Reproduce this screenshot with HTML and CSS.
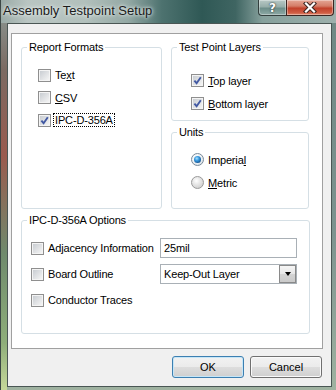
FILE: index.html
```html
<!DOCTYPE html>
<html lang="en">
<head>
    <meta charset="UTF-8">
    <meta name="viewport" content="width=device-width, initial-scale=1.0">
    <title>Assembly Testpoint Setup</title>
    <link rel="stylesheet" href="styles.css">
</head>
<body>
    <div class="window">
        <div class="titlebar">
            <span class="title">Assembly Testpoint Setup</span>
            <div class="caption-buttons">
                <span class="cap-btn help">?</span>
                <span class="cap-btn close">
                    <svg width="14" height="11" viewBox="0 0 14 11">
                        <path d="M3 1.5 L11 9.5 M11 1.5 L3 9.5" stroke="#3a2420" stroke-width="4.2" stroke-linecap="square"/>
                        <path d="M3 1.5 L11 9.5 M11 1.5 L3 9.5" stroke="#fff" stroke-width="2.2" stroke-linecap="square"/>
                    </svg>
                </span>
            </div>
        </div>

        <div class="client">
            <div class="panel">
                <div class="top-row">
                    <fieldset class="group formats">
                        <legend>Report Formats</legend>
                        <label class="check"><span class="box"></span><span>Te<u>x</u>t</span></label>
                        <label class="check"><span class="box"></span><span><u>C</u>SV</span></label>
                        <label class="check"><span class="box checked"><svg width="9" height="9" viewBox="0 0 9 9"><path d="M1.4 4.6 L3.6 7.2 L7.8 1.2" fill="none" stroke="#4259a3" stroke-width="1.9"/></svg></span><span class="focus">IPC-D-356A</span></label>
                    </fieldset>

                    <div class="right-col">
                        <fieldset class="group layers">
                            <legend>Test Point Layers</legend>
                            <label class="check"><span class="box checked"><svg width="9" height="9" viewBox="0 0 9 9"><path d="M1.4 4.6 L3.6 7.2 L7.8 1.2" fill="none" stroke="#4259a3" stroke-width="1.9"/></svg></span><span><u>T</u>op layer</span></label>
                            <label class="check"><span class="box checked"><svg width="9" height="9" viewBox="0 0 9 9"><path d="M1.4 4.6 L3.6 7.2 L7.8 1.2" fill="none" stroke="#4259a3" stroke-width="1.9"/></svg></span><span><u>B</u>ottom layer</span></label>
                        </fieldset>
                        <fieldset class="group units">
                            <legend>Units</legend>
                            <label class="check"><span class="radio on"><span class="dot"></span></span><span>Imperia<u>l</u></span></label>
                            <label class="check"><span class="radio"></span><span><u>M</u>etric</span></label>
                        </fieldset>
                    </div>
                </div>

                <fieldset class="group options">
                    <legend>IPC-D-356A Options</legend>
                    <div class="option-grid">
                        <label class="check"><span class="box"></span><span>Adjacency Information</span></label>
                        <div class="field">25mil</div>
                        <label class="check"><span class="box"></span><span>Board Outline</span></label>
                        <div class="field combo">
                            <span>Keep-Out Layer</span>
                            <span class="drop"><span class="arrow"></span></span>
                        </div>
                        <label class="check"><span class="box"></span><span>Conductor Traces</span></label>
                    </div>
                </fieldset>
            </div>

            <div class="buttons">
                <button class="btn default">OK</button>
                <button class="btn">Cancel</button>
            </div>
        </div>
    </div>
</body>
</html>
```

FILE: styles.css
```css
body {
    margin: 0;
    font-family: "Liberation Sans", Arial, sans-serif;
    font-size: 11px;
    letter-spacing: -0.15px;
    color: #000;
}
* {
    box-sizing: border-box;
}
.window {
    width: 336px;
    height: 390px;
    display: flex;
    flex-direction: column;
    border-left: 1px solid #3c4745;
    background:
        linear-gradient(180deg, #8d9c98 0%, #7b6a62 18%, #9a5a4e 40%, #6f8a6c 65%, #8fae7a 88%, #c6d89a 100%) left top / 6px 100% no-repeat,
        linear-gradient(180deg, #6e8783 0%, #7d938f 60%, #9fb2a0 100%);
}
.titlebar {
    height: 23px;
    display: flex;
    justify-content: space-between;
    align-items: flex-start;
    background: linear-gradient(90deg, #9aaaa6 0%, #b9c5c2 8%, #b2c0bc 25%, #93a8a4 38%, #4d726f 48%, #2f5855 60%, #3f6562 70%, #86a09c 78%, #9db0ac 100%);
}
.title {
    font-size: 13px;
    line-height: 15px;
    letter-spacing: 0;
    padding: 3px 0 0 2px;
    color: #1b1b1b;
    text-shadow: 0 0 5px #e8efee, 0 0 3px #e8efee;
}
.caption-buttons {
    display: flex;
    margin-right: 2px;
}
.cap-btn {
    height: 16px;
    display: flex;
    align-items: center;
    justify-content: center;
    border: 1px solid #34403f;
    border-top: none;
    box-shadow: inset 0 0 0 1px rgba(255, 255, 255, 0.35);
}
.help {
    width: 28px;
    border-right: none;
    border-bottom-left-radius: 4px;
    background: linear-gradient(180deg, #b8c8c5 0%, #97aeaa 45%, #6d8e8a 55%, #8ea9a5 100%);
    color: #fff;
    font-family: "DejaVu Sans", sans-serif;
    font-weight: bold;
    font-size: 12px;
    text-shadow: 0 0 2px #2c3a3a, 0 0 1px #2c3a3a;
}
.close {
    width: 48px;
    border-color: #3b2622;
    border-bottom-right-radius: 4px;
    background: linear-gradient(180deg, #e4a695 0%, #d57d68 40%, #c2412b 55%, #cf5d44 85%, #e08a6e 100%);
}
.client {
    flex: 1;
    margin: 0 4px 3px 6px;
    border: 1px solid #4a5654;
    background: #f0f0f0;
}
.panel {
    width: 312px;
    height: 316px;
    margin: 9px 0 0 3px;
    padding-left: 9px;
    border: 1px solid #a0a0a0;
    background: #fff;
}
.top-row {
    display: flex;
    gap: 9px;
    margin-top: 7px;
}
.group {
    margin: 0;
    min-width: 0;
    border: 1px solid #d5dfe5;
    border-radius: 3px;
}
.group legend {
    padding: 0 2px;
    line-height: 13px;
}
.formats {
    width: 141px;
    height: 168px;
    padding: 10px 0 0 16px;
}
.formats legend {
    margin-left: -11px;
}
.right-col {
    display: flex;
    flex-direction: column;
    gap: 5px;
    width: 138px;
}
.layers {
    height: 80px;
    padding: 15px 0 0 19px;
}
.units {
    height: 83px;
    padding: 9px 0 0 19px;
}
.layers legend,
.units legend {
    margin-left: -14px;
}
.check {
    display: flex;
    align-items: center;
    gap: 3px;
    height: 23px;
}
.formats .check {
    height: 22.5px;
}
.box {
    width: 13px;
    height: 13px;
    flex: none;
    padding: 1px;
    border: 1px solid #8f8f8f;
    background: linear-gradient(135deg, #c9cdd2, #f4f4f4) content-box, #f4f4f4;
    margin-right: 1px;
}
.box svg {
    display: block;
}
.radio {
    width: 13px;
    height: 13px;
    flex: none;
    display: flex;
    align-items: center;
    justify-content: center;
    border: 1px solid #9a9a9a;
    border-radius: 50%;
    background: radial-gradient(circle at 40% 35%, #ffffff 0%, #e6e6e6 40%, #c4c4c4 100%);
    margin-right: 1px;
}
.radio.on {
    border-color: #7a8a98;
    background: radial-gradient(circle at 40% 35%, #ffffff 0%, #eef2f5 50%, #c9d3da 100%);
}
.dot {
    width: 7px;
    height: 7px;
    border-radius: 50%;
    background: radial-gradient(circle at 40% 35%, #a8e1ff 0%, #3a9be0 35%, #0f4f8c 80%, #0b3a68 100%);
}
.focus {
    outline: 1px dotted #000;
    outline-offset: 0;
    padding: 0 1px;
    margin-left: -1px;
}
.options {
    width: 289px;
    height: 120px;
    margin-top: 5px;
    padding: 11px 0 0 9px;
}
.options legend {
    margin-left: -4px;
}
.option-grid {
    display: grid;
    grid-template-columns: 129px 137px;
    grid-auto-rows: 20px;
    row-gap: 6px;
}
.option-grid .check {
    height: 20px;
}
.field {
    height: 20px;
    display: flex;
    align-items: center;
    padding-left: 3px;
    border: 1px solid #a9b0b6;
    background: #fff;
}
.combo {
    justify-content: space-between;
    padding-right: 0;
}
.drop {
    width: 17px;
    height: 18px;
    display: flex;
    align-items: center;
    justify-content: center;
    border: 1px solid #8a8a8a;
    background: linear-gradient(180deg, #f6f6f6 0%, #e6e6e6 50%, #d4d4d4 51%, #cacaca 100%);
}
.arrow {
    width: 0;
    height: 0;
    border-left: 3.5px solid transparent;
    border-right: 3.5px solid transparent;
    border-top: 4px solid #000;
}
.buttons {
    display: flex;
    justify-content: flex-end;
    gap: 6px;
    margin: 7px 9px 0 0;
}
.btn {
    width: 72px;
    height: 22px;
    padding: 0;
    font-family: "Liberation Sans", Arial, sans-serif;
    font-size: 11px;
    color: #000;
    border: 1px solid #707070;
    border-radius: 3px;
    background: linear-gradient(180deg, #f2f2f2 0%, #ebebeb 50%, #dddddd 51%, #cfcfcf 100%);
    box-shadow: inset 0 0 0 1px #fafafa;
}
.btn.default {
    border-color: #3c7fb1;
    box-shadow: inset 0 0 0 1px #c6e6f7;
}
```
